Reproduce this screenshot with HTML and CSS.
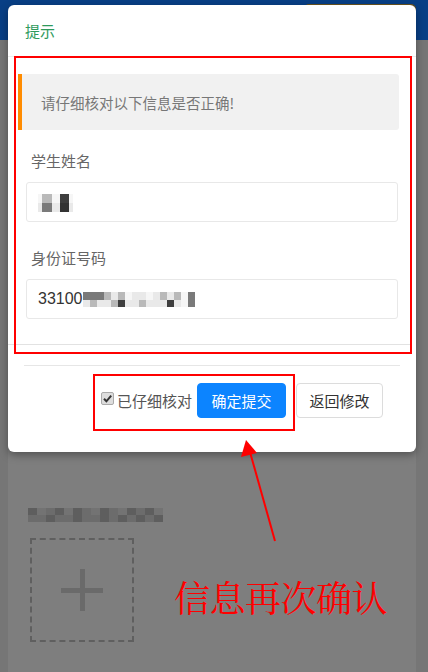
FILE: index.html
```html
<!DOCTYPE html>
<html lang="zh-CN">
<head>
<meta charset="utf-8">
<title>提示</title>
<link rel="stylesheet" href="styles.css">
</head>
<body>
<div class="page">
  <div class="topbar"><div class="top-btn"></div></div>
  <div class="main">
    <div class="pix-grid bg-pix">
      <i class="d2"></i><i class="d3"></i><i class="d1"></i><i class="d2"></i><i class="d3"></i><i class="d2"></i><i class="d1"></i><i class="d3"></i><i class="d2"></i><i class="d1"></i><i class="d3"></i><i class="d2"></i><i class="d1"></i><i class="d2"></i><i class="d3"></i><i class="d0"></i>
      <i class="d1"></i><i class="d1"></i><i class="d2"></i><i class="d1"></i><i class="d1"></i><i class="d2"></i><i class="d1"></i><i class="d1"></i><i class="d2"></i><i class="d1"></i><i class="d2"></i><i class="d1"></i><i class="d2"></i><i class="d1"></i><i class="d2"></i><i class="d0"></i>
    </div>
    <div class="upload"><span class="plus-h"></span><span class="plus-v"></span></div>
  </div>
</div>

<div class="modal">
  <div class="modal-header"><span class="modal-title">提示</span></div>
  <div class="modal-body">
    <div class="alert">请仔细核对以下信息是否正确!</div>
    <div class="form-group">
      <div class="label">学生姓名</div>
      <div class="input">
        <span class="pix-grid name-pix">
          <i class="l0"></i><i class="l2"></i><i class="l0"></i><i class="l5"></i><i class="l0"></i>
          <i class="l1"></i><i class="l3"></i><i class="l1"></i><i class="l5"></i><i class="l1"></i>
        </span>
      </div>
    </div>
    <div class="form-group">
      <div class="label">身份证号码</div>
      <div class="input">
        <span class="id-text">33100</span>
        <span class="pix-grid id-pix">
          <i class="l3"></i><i class="l3"></i><i class="l3"></i><i class="l2"></i><i class="l1"></i><i class="l2"></i><i class="l0"></i><i class="l1"></i><i class="l1"></i><i class="l0"></i><i class="l1"></i><i class="l2"></i><i class="l1"></i><i class="l2"></i><i class="l0"></i><i class="l3"></i>
          <i class="l1"></i><i class="l2"></i><i class="l1"></i><i class="l1"></i><i class="l2"></i><i class="l5"></i><i class="l1"></i><i class="l1"></i><i class="l2"></i><i class="l1"></i><i class="l1"></i><i class="l1"></i><i class="l5"></i><i class="l1"></i><i class="l0"></i><i class="l3"></i>
        </span>
      </div>
    </div>
  </div>
  <div class="modal-footer">
    <label class="confirm">
      <span class="checkbox"><svg viewBox="0 0 13 13" width="13" height="13"><path d="M3 6.8 L5.4 9.3 L10.2 3.6" fill="none" stroke="#333" stroke-width="2"/></svg></span>
      <span>已仔细核对</span>
    </label>
    <button class="btn btn-primary">确定提交</button>
    <button class="btn btn-default">返回修改</button>
  </div>
</div>

<div class="mark mark-body"></div>
<div class="mark mark-footer"></div>
<svg class="arrow" width="428" height="672" viewBox="0 0 428 672">
  <line x1="275" y1="541" x2="250" y2="452" stroke="#ff0000" stroke-width="2"/>
  <polygon points="246,440 257,453 241,457" fill="#ff0000"/>
</svg>
<div class="note">信息再次确认</div>
</body>
</html>
```

FILE: styles.css
```css
* { box-sizing: border-box; }
html, body { margin: 0; padding: 0; }
body {
  width: 428px;
  height: 672px;
  overflow: hidden;
  position: relative;
  font-family: "Noto Sans CJK SC", "Liberation Sans", sans-serif;
  background: #767676;
}
.page { display: flex; flex-direction: column; height: 672px; }
.topbar {
  height: 40px;
  background: #083f85;
  display: flex;
  justify-content: flex-end;
  padding: 4px 12px 0 0;
}
.top-btn {
  width: 112px;
  height: 30px;
  background: #6b5420;
  border-radius: 5px;
}
.main {
  flex: 1;
  margin: 0 12px 0 8px;
  background: #7e7e7e;
  padding: 468px 0 0 20px;
}
.pix-grid { display: inline-grid; vertical-align: middle; }
.pix-grid i { display: block; }
.bg-pix {
  display: grid;
  width: max-content;
  grid-template-columns: repeat(16, 9px);
  grid-template-rows: 7px 7px;
}
.d0 { background: #7e7e7e; }
.d1 { background: #6c6c6c; }
.d2 { background: #5e5e5e; }
.d3 { background: #737373; }
.upload {
  margin: 16px 0 0 2px;
  width: 104px;
  height: 104px;
  border: 2px dashed #5f5f5f;
  position: relative;
  display: flex;
  align-items: center;
  justify-content: center;
}
.plus-h, .plus-v { position: absolute; background: #6a6a6a; }
.plus-h { width: 42px; height: 5px; }
.plus-v { width: 5px; height: 42px; }

.modal {
  position: absolute;
  left: 8px;
  top: 5px;
  width: 408px;
  height: 447px;
  background: #fff;
  border-radius: 6px;
  box-shadow: 0 3px 8px rgba(0,0,0,0.35);
}
.modal-header {
  height: 52px;
  display: flex;
  align-items: center;
  padding-left: 17px;
  border-bottom: 1px solid #ececec;
}
.modal-title { color: #2f9a5c; font-size: 15px; }
.modal-body {
  padding: 17px 11px 25px 10px;
  border-bottom: 1px solid #e2e2e2;
  margin-right: 6px;
}
.alert {
  height: 56px;
  background: #f1f1f1;
  border-left: 4px solid #ff8b00;
  border-radius: 0 3px 3px 0;
  display: flex;
  align-items: center;
  padding-left: 19px;
  font-size: 14.5px;
  color: #777;
}
.form-group { padding: 0 1px 0 8px; }
.label {
  margin-top: 21px;
  padding-left: 5px;
  font-size: 15px;
  line-height: 20px;
  color: #666;
}
.form-group + .form-group .label { margin-top: 26px; }
.input {
  margin-top: 11px;
  height: 40px;
  border: 1px solid #e8e8e8;
  border-radius: 3px;
  display: flex;
  align-items: center;
  padding-left: 11px;
}
.name-pix {
  grid-template-columns: 4px 10px 8px 9px 4px;
  grid-template-rows: 9px 9px;
  margin-top: 2px;
}
.l0 { background: #f6f6f6; }
.l1 { background: #e9e9e9; }
.l2 { background: #b9b9b9; }
.l3 { background: #7a7a7a; }
.l5 { background: #3e3e3e; }
.name-pix .l1:nth-child(7) { background: #7d7d7d; }
.name-pix .l5:nth-child(9) { background: #333; }
.id-text {
  font-family: "Liberation Sans", sans-serif;
  font-size: 16px;
  color: #333;
}
.id-pix {
  grid-template-columns: repeat(16, 7px);
  grid-template-rows: 8px 7px;
}
.modal-footer {
  margin: 20px 16px 0;
  border-top: 1px solid #e6e6e6;
  padding: 17px 17px 0 0;
  display: flex;
  justify-content: flex-end;
  align-items: center;
}
.confirm {
  display: flex;
  align-items: center;
  font-size: 15px;
  color: #555;
  margin-right: 5px;
  white-space: nowrap;
}
.checkbox {
  width: 13px;
  height: 13px;
  margin-right: 3px;
  border: 1px solid #aaa;
  border-radius: 2px;
  background: #ddd;
  display: flex;
  margin-top: -5px;
}
.checkbox svg { display: block; margin: -1px; }
.btn {
  height: 35px;
  border-radius: 4px;
  font-family: "Noto Sans CJK SC", sans-serif;
  font-size: 15px;
  padding: 0;
  white-space: nowrap;
  cursor: pointer;
}
.btn-primary {
  width: 89px;
  background: #0c84ff;
  border: 1px solid #0c84ff;
  color: #fff;
}
.btn-default {
  width: 87px;
  margin-left: 10px;
  background: #fff;
  border: 1px solid #dcdcdc;
  color: #333;
}

.mark { position: absolute; border: 2px solid #ff0000; }
.mark-body { left: 14px; top: 56px; width: 398px; height: 298px; }
.mark-footer { left: 93px; top: 374px; width: 202px; height: 57px; }
.arrow { position: absolute; left: 0; top: 0; pointer-events: none; }
.note {
  position: absolute;
  left: 174px;
  top: 573px;
  font-family: "Noto Serif CJK SC", "Noto Sans CJK SC", serif;
  font-size: 36px;
  line-height: 48px;
  color: #ff0000;
  letter-spacing: -0.5px;
}
```
